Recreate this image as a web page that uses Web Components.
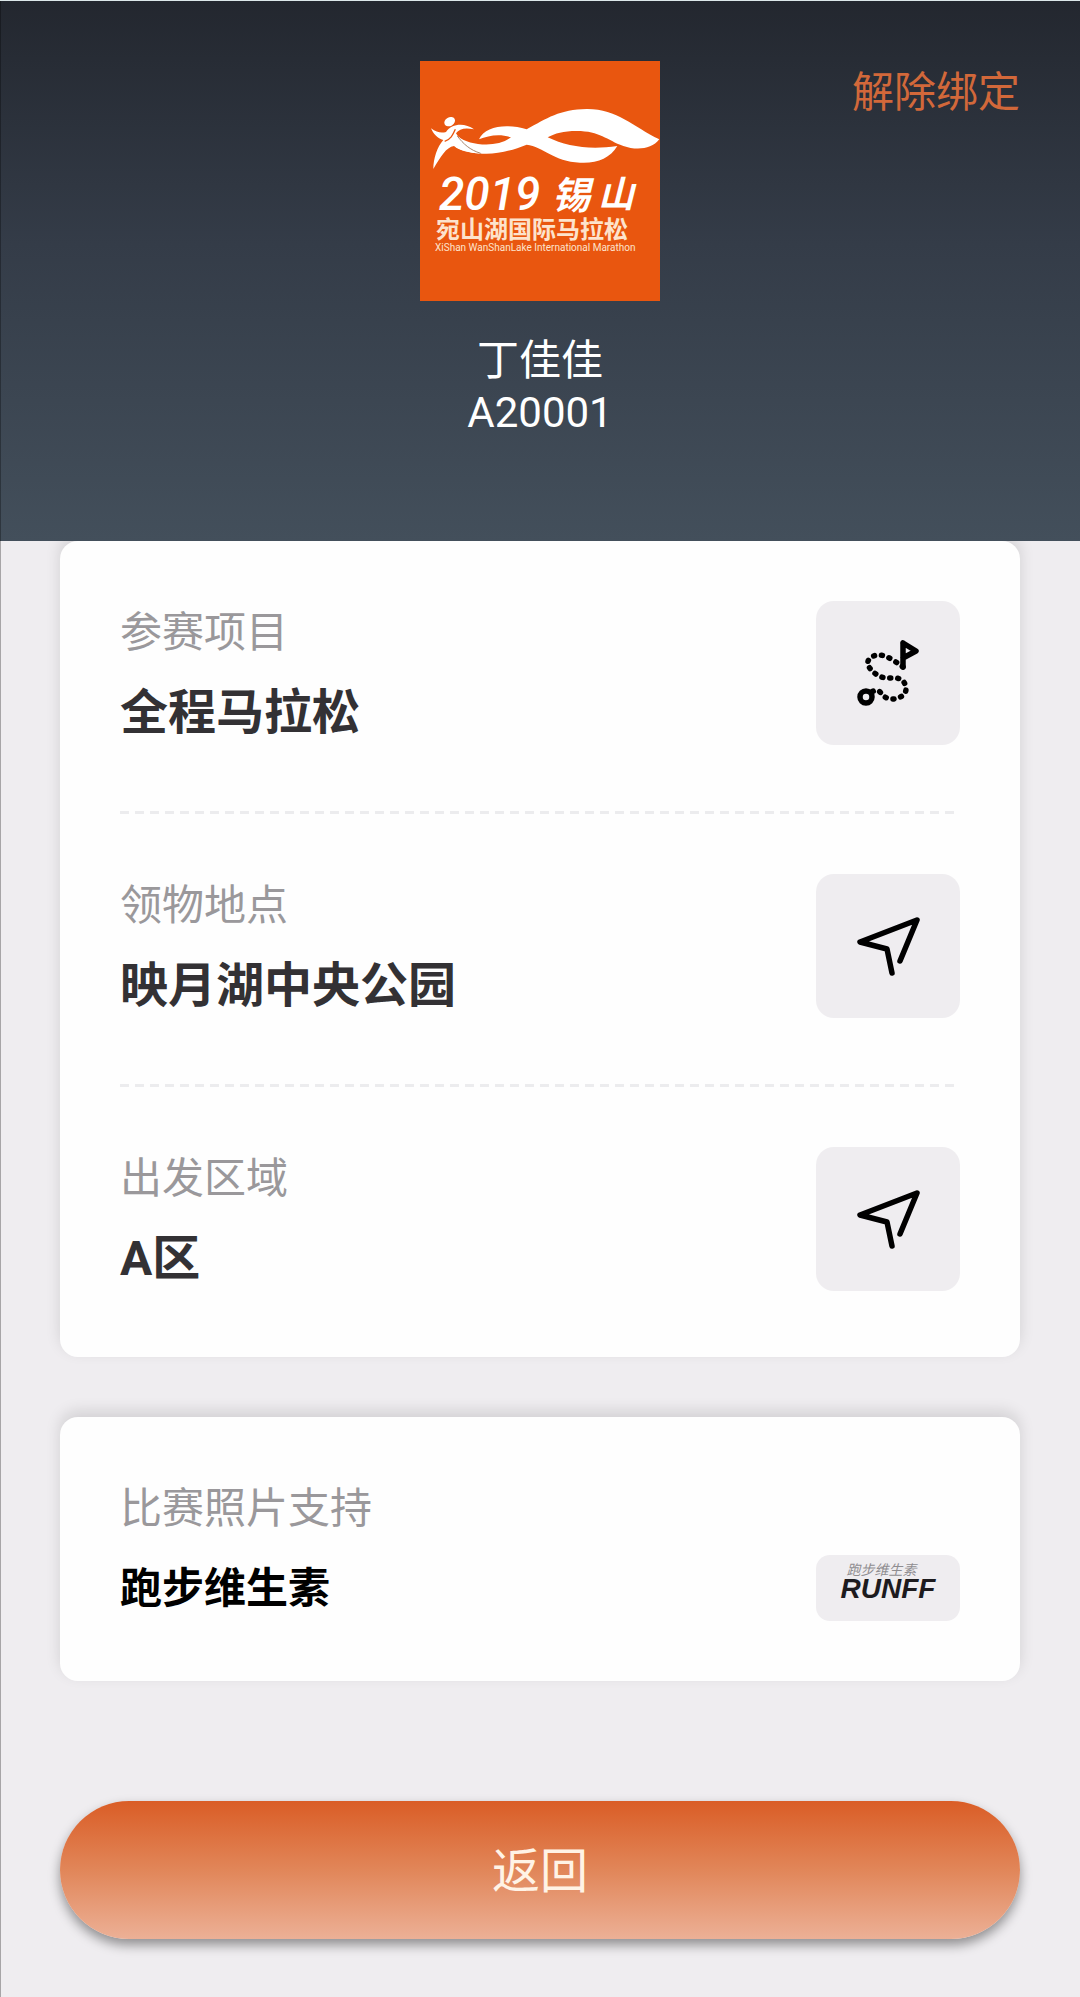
<!DOCTYPE html>
<html lang="zh-CN">
<head>
<meta charset="UTF-8">
<meta name="viewport" content="width=device-width, initial-scale=1">
<title>锡山宛山湖国际马拉松</title>
<style>
    body {
        margin: 0;
        background: #efedf0;
        font-family: Roboto, "Noto Sans CJK SC", sans-serif;
    }
</style>
</head>
<body>

<runner-page>
    <runner-header slot="header" name="丁佳佳" number="A20001">
        <event-logo></event-logo>
    </runner-header>

    <info-card>
        <info-row label="参赛项目" value="全程马拉松">
            <icon-tile icon="route" label="路线"></icon-tile>
        </info-row>
        <info-row label="领物地点" value="映月湖中央公园">
            <icon-tile icon="arrow" label="导航到领物地点"></icon-tile>
        </info-row>
        <info-row label="出发区域" value="A区">
            <icon-tile icon="arrow" label="导航到出发区域"></icon-tile>
        </info-row>
    </info-card>

    <info-card>
        <info-row class="compact" label="比赛照片支持" value="跑步维生素">
            <sponsor-badge></sponsor-badge>
        </info-row>
    </info-card>

    <pill-button>返回</pill-button>
</runner-page>

<script>

// < ======================================================
// < Icons
// < ======================================================

const ICONS = {
    route: `
        <path d="M51 6V30M51 6L64 14L51 21"/>
        <circle cx="14" cy="60" r="6"/>
        <path stroke-dasharray="1 6.9" d="M51 30C44 25 35 18 27 18S13 24 17 30S28 41 35 41H43C50 41 54 46 54 52S47 62 40 62S31 58 28 55S22 54 19 55"/>`,
    arrow: `<path d="M48 51L65 10L8 32L35 39L40 63"/>`
};

/**
 * Attach an open shadow root filled with styles and markup
 * @param {HTMLElement} host
 * @param {string} css
 * @param {string} html
 */
function render(host, css, html) {
    host.attachShadow({ mode: 'open' }).innerHTML = `<style>${css}</style>${html}`;
}

// < ======================================================
// < Page
// < ======================================================

class RunnerPage extends HTMLElement {
    constructor() {
        super();
        render(this, /*css*/`
            :host {
                display: block;
                position: relative;
                box-sizing: border-box;
                min-height: 100vh;
                border-top: 1px solid #dde8ea;
            }
            /* hairline down the left edge, over the header as well */
            :host::before {
                content: "";
                position: absolute;
                inset: 0 auto 0 0;
                width: 1px;
                z-index: 1;
                background: rgba(0, 0, 0, 0.3);
            }
            main {
                display: flex;
                flex-direction: column;
                gap: 60px;
                padding: 0 60px 58px;
            }
            ::slotted(pill-button) {
                margin-top: 60px;
            }
        `, /*html*/`
            <slot name="header"></slot>
            <main><slot></slot></main>
        `);
    }
}

class RunnerHeader extends HTMLElement {
    connectedCallback() {
        render(this, /*css*/`
            :host {
                display: grid;
                grid-template-columns: 1fr auto 1fr;
                align-items: start;
                position: relative;
                padding: 60px 60px 102px;
                background: linear-gradient(#23272f, #343c48 45%, #434f5b);
                color: #fff;
                font-size: 42px;
                line-height: 52px;
            }
            .runner {
                grid-column: 2;
                display: flex;
                flex-direction: column;
                align-items: center;
            }
            .name {
                margin-top: 34px;
            }
            button {
                justify-self: end;
                padding: 0;
                border: 0;
                background: none;
                color: #d2683a;
                font: inherit;
                line-height: 64px;
            }
        `, /*html*/`
            <div class="runner">
                <slot></slot>
                <span class="name">${this.getAttribute('name')}</span>
                <span>${this.getAttribute('number')}</span>
            </div>
            <button type="button">解除绑定</button>
        `);
    }
}

class EventLogo extends HTMLElement {
    constructor() {
        super();
        render(this, /*css*/`
            :host {
                display: block;
                width: 240px;
                height: 240px;
                background: #e9560f;
            }
            svg {
                display: block;
                fill: #fff;
            }
            text {
                font-family: Roboto, "Noto Sans CJK SC", sans-serif;
            }
            .soft {
                fill: #fde3cc;
            }
        `, /*html*/`
            <svg width="240" height="240" viewBox="0 0 240 240">
                <g transform="scale(0.3333) translate(-30 -33)">
                    <path d="M207 268C225 228 290 220 350 238C410 205 450 178 530 177C620 176 670 230 748 268C725 298 680 302 640 288C590 270 570 243 500 243C460 243 435 250 413 262C470 290 540 300 622 288C600 325 560 341 510 338C430 334 400 290 350 284C300 304 250 316 205 310C170 306 150 300 136 290L146 260C175 285 260 296 303 262C270 250 235 256 207 268Z"/>
                    <ellipse cx="119" cy="215" rx="17" ry="13" transform="rotate(-30 119 215)"/>
                    <path d="M63 235C80 248 95 250 108 246C125 220 165 218 192 238C165 232 148 236 138 250C150 270 180 300 212 311C175 308 150 302 132 288C108 292 92 320 70 357C70 325 82 290 100 270C82 265 70 252 63 235Z"/>
                    <path d="M142 258C160 282 180 300 212 310" fill="none" stroke="#a8856c" stroke-width="3"/>
                    <path d="M136 238C128 256 122 268 104 274" fill="none" stroke="#e9560f" stroke-width="4"/>
                </g>
                <text x="19" y="149" font-size="46" font-weight="500" font-style="italic">2019</text>
                <text x="132" y="148" font-size="38" font-weight="700" font-style="italic">锡</text>
                <text x="178" y="146" font-size="36" font-weight="700" font-style="italic">山</text>
                <text class="soft" x="16" y="177" font-size="24" font-weight="700">宛山湖国际马拉松</text>
                <text class="soft" x="15" y="190" font-size="10">XiShan WanShanLake International Marathon</text>
            </svg>
        `);
    }
}

// < ======================================================
// < Cards
// < ======================================================

class InfoCard extends HTMLElement {
    constructor() {
        super();
        render(this, /*css*/`
            :host {
                display: block;
                padding: 0 60px;
                border-radius: 18px;
                background: #fefefe;
                box-shadow: 0 -6px 15px rgba(0, 0, 0, 0.12);
            }
            ::slotted(info-row:not(:last-child)) {
                border-bottom: 3px solid transparent;
                background: repeating-linear-gradient(90deg, #ececee 0 9px, transparent 9px 15px) bottom / 100% 3px no-repeat border-box;
            }
        `, `<slot></slot>`);
    }
}

class InfoRow extends HTMLElement {
    connectedCallback() {
        render(this, /*css*/`
            :host {
                display: flex;
                justify-content: space-between;
                align-items: flex-end;
                padding: 60px 0 66px;
            }
            :host(.compact) {
                padding-bottom: 60px;
            }
            .label {
                color: #9a989b;
                font-size: 42px;
                line-height: 64px;
            }
            .value {
                margin-top: 16px;
                color: #333134;
                font-size: 48px;
                font-weight: 700;
                line-height: 64px;
            }
            :host(.compact) .value {
                color: #000;
                font-size: 42px;
            }
        `, /*html*/`
            <div>
                <div class="label">${this.getAttribute('label')}</div>
                <div class="value">${this.getAttribute('value')}</div>
            </div>
            <slot></slot>
        `);
    }
}

class IconTile extends HTMLElement {
    connectedCallback() {
        render(this, /*css*/`
            :host {
                display: block;
            }
            button {
                display: grid;
                place-items: center;
                width: 144px;
                height: 144px;
                padding: 0;
                border: 0;
                border-radius: 18px;
                background: #efedf0;
            }
            svg {
                fill: none;
                stroke: #000;
                stroke-width: 5.5;
                stroke-linecap: round;
                stroke-linejoin: round;
            }
        `, /*html*/`
            <button type="button" aria-label="${this.getAttribute('label')}">
                <svg width="72" height="72" viewBox="0 0 72 72">${ICONS[this.getAttribute('icon')]}</svg>
            </button>
        `);
    }
}

class SponsorBadge extends HTMLElement {
    constructor() {
        super();
        render(this, /*css*/`
            :host {
                display: flex;
                justify-content: center;
                box-sizing: border-box;
                width: 144px;
                height: 66px;
                padding-top: 8px;
                border-radius: 14px;
                background: #efedf0;
                font-style: italic;
            }
            .small {
                padding-left: 6px;
                color: #8f8d90;
                font-size: 14px;
                line-height: 14px;
            }
            .brand {
                color: #1d1b1e;
                font-family: "Liberation Sans", sans-serif;
                font-size: 28px;
                font-weight: 700;
                line-height: 24px;
            }
        `, /*html*/`
            <div>
                <div class="small">跑步维生素</div>
                <div class="brand">RUNFF</div>
            </div>
        `);
    }
}

// < ======================================================
// < Button
// < ======================================================

class PillButton extends HTMLElement {
    constructor() {
        super();
        render(this, /*css*/`
            :host {
                display: block;
            }
            button {
                display: block;
                width: 100%;
                height: 138px;
                padding: 0 0 6px;
                border: 0;
                border-radius: 69px;
                background: linear-gradient(#da5d26, #e18659 50%, #ecb096);
                box-shadow: 0 6px 12px rgba(0, 0, 0, 0.4);
                color: #fff3e6;
                font: inherit;
                font-size: 48px;
            }
        `, `<button type="button"><slot></slot></button>`);
    }
}

customElements.define('runner-page', RunnerPage);
customElements.define('runner-header', RunnerHeader);
customElements.define('event-logo', EventLogo);
customElements.define('info-card', InfoCard);
customElements.define('info-row', InfoRow);
customElements.define('icon-tile', IconTile);
customElements.define('sponsor-badge', SponsorBadge);
customElements.define('pill-button', PillButton);

</script>
</body>
</html>
